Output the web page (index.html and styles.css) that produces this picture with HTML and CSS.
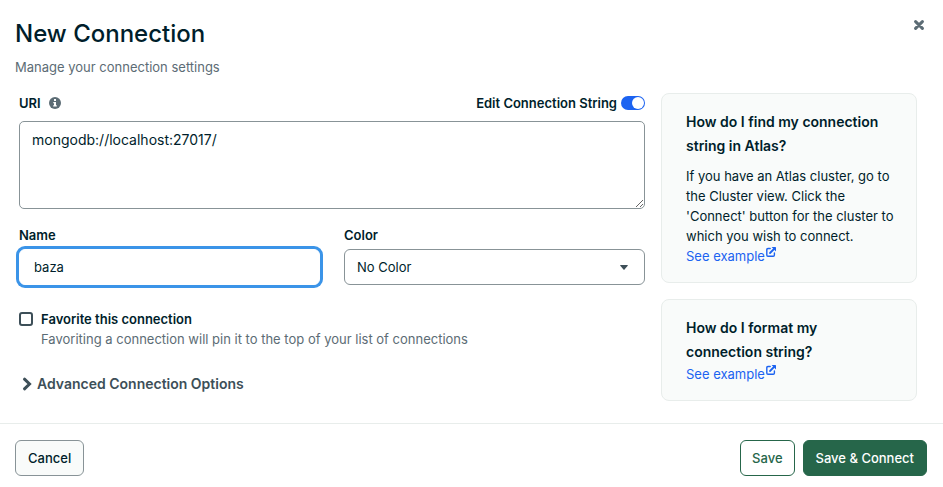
FILE: index.html
```html
<!DOCTYPE html>
<html lang="en">
<head>
<meta charset="utf-8">
<meta name="viewport" content="width=device-width, initial-scale=1">
<title>New Connection</title>
<link rel="stylesheet" href="styles.css">
</head>
<body>
<main class="dialog">
  <header class="header">
    <div>
      <h1 class="title">New Connection</h1>
      <p class="subtitle">Manage your connection settings</p>
    </div>
    <button class="close" type="button" aria-label="Close">
      <svg width="10" height="10" viewBox="0 0 10 10"><path d="M1.6 1.6 8.4 8.4M8.4 1.6 1.6 8.4" stroke="currentColor" stroke-width="3" stroke-linecap="round"/></svg>
    </button>
  </header>
  <div class="content">
    <form class="form" id="connection">
      <div class="uri-row">
        <label class="label" for="uri">URI</label>
        <svg class="info" width="12" height="12" viewBox="0 0 12 12" aria-hidden="true"><circle cx="6" cy="6" r="6" fill="#5c6c75"/><path d="M5 2h2v2H5zM4.3 5H7v3.2h.8v1.2H4.2V8.2H5v-2h-.7z" fill="#fff"/></svg>
        <label class="label toggle-label" for="edit">Edit Connection String</label>
        <input class="toggle" id="edit" type="checkbox" role="switch" checked>
      </div>
      <textarea class="field uri" id="uri" spellcheck="false">mongodb://localhost:27017/</textarea>
      <div class="columns">
        <div class="column">
          <label class="label" for="name">Name</label>
          <input class="field name" id="name" type="text" value="baza">
        </div>
        <div class="column">
          <label class="label" for="color">Color</label>
          <div class="select-wrap">
            <select class="field select" id="color"><option>No Color</option></select>
            <svg class="caret" width="8" height="5" viewBox="0 0 8 5" aria-hidden="true"><path d="M.7 0h6.6q.8 0 .4.7L4.5 4.6q-.5.6-1 0L.3.7Q-.1 0 .7 0z" fill="#3d4f58"/></svg>
          </div>
        </div>
      </div>
      <div class="favorite">
        <input class="checkbox" id="favorite" type="checkbox" aria-describedby="favorite-help">
        <div>
          <label class="label favorite-label" for="favorite">Favorite this connection</label>
          <p class="help" id="favorite-help">Favoriting a connection will pin it to the top of your list of connections</p>
        </div>
      </div>
      <button class="advanced" type="button" aria-expanded="false">
        <svg width="10" height="14" viewBox="0 0 10 14" aria-hidden="true"><path d="M2.5 2.2 7.5 7 2.5 11.8" fill="none" stroke="currentColor" stroke-width="3" stroke-linecap="round" stroke-linejoin="miter"/></svg>
        Advanced Connection Options
      </button>
    </form>
    <aside class="cards">
      <section class="card">
        <h2 class="card-title">How do I find my connection string in Atlas?</h2>
        <p class="card-text">If you have an Atlas cluster, go to the Cluster view. Click the 'Connect' button for the cluster to which you wish to connect.</p>
        <a class="link" href="#atlas">See example<svg class="external" width="10" height="10" viewBox="0 0 10 10" aria-hidden="true"><path d="M4.2 1.5H2Q.8 1.5.8 2.7V8Q.8 9.2 2 9.2h5.2Q8.4 9.2 8.4 8V6" fill="none" stroke="currentColor" stroke-width="1.4" stroke-linecap="round"/><path d="M4 6 8 2" stroke="currentColor" stroke-width="1.8" stroke-linecap="round"/><path d="M5.6 0H9.4Q10 0 10 .6V4.4z" fill="currentColor"/></svg></a>
      </section>
      <section class="card">
        <h2 class="card-title tight">How do I format my connection string?</h2>
        <a class="link" href="#format">See example<svg class="external" width="10" height="10" viewBox="0 0 10 10" aria-hidden="true"><path d="M4.2 1.5H2Q.8 1.5.8 2.7V8Q.8 9.2 2 9.2h5.2Q8.4 9.2 8.4 8V6" fill="none" stroke="currentColor" stroke-width="1.4" stroke-linecap="round"/><path d="M4 6 8 2" stroke="currentColor" stroke-width="1.8" stroke-linecap="round"/><path d="M5.6 0H9.4Q10 0 10 .6V4.4z" fill="currentColor"/></svg></a>
      </section>
    </aside>
  </div>
  <footer class="footer">
    <button class="button cancel" type="button">Cancel</button>
    <button class="button save" type="button">Save</button>
    <button class="button connect" type="submit" form="connection">Save &amp; Connect</button>
  </footer>
</main>
</body>
</html>
```
FILE: styles.css
```css
* {
  box-sizing: border-box;
}

body {
  margin: 0;
  background: #fff;
  color: #001e2b;
  font: 13px/20px Inter, "Liberation Sans", sans-serif;
}

h1, h2, p {
  margin: 0;
}

button, input, select, textarea {
  margin: 0;
  color: inherit;
  font: inherit;
}

.header {
  display: flex;
  align-items: flex-start;
  justify-content: space-between;
  padding: 18px 16px 16px 15px;
}

.title {
  font-size: 24px;
  font-weight: 500;
  line-height: 32px;
}

.subtitle {
  margin-top: 7px;
  color: #5c6c75;
}

.close {
  display: flex;
  padding: 2px 3px;
  border: 0;
  background: none;
  color: #5c6c75;
}

.content {
  display: grid;
  grid-template-columns: 1fr 256px;
  gap: 16px;
  align-items: start;
  padding: 0 26px 22px 19px;
}

.label {
  font-weight: 600;
}

.uri-row {
  display: flex;
  align-items: center;
  margin-bottom: 8px;
}

.info {
  margin-left: 8px;
}

.toggle-label {
  margin-left: auto;
}

.toggle {
  display: flex;
  justify-content: flex-end;
  width: 24px;
  height: 14px;
  margin-left: 4px;
  padding: 1px;
  appearance: none;
  border-radius: 7px;
  background: #1c63f1;
}

.toggle::before {
  content: "";
  width: 12px;
  height: 12px;
  border-radius: 50%;
  background: #fff;
}

.field {
  display: block;
  width: 100%;
  height: 36px;
  border: 1px solid #889397;
  border-radius: 6px;
  background: #fff;
}

.uri {
  height: 88px;
  padding: 8px 12px;
  border-radius: 5px;
  font-size: 14px;
  resize: vertical;
}

.columns {
  display: grid;
  grid-template-columns: 1fr 1fr;
  gap: 24px;
  margin-top: 16px;
}

.column {
  display: grid;
  gap: 4px;
}

.name {
  padding: 0 14px;
  border-color: #fff;
  box-shadow: 0 0 0 3px #3b94e8;
  outline: none;
}

.select-wrap {
  display: grid;
  align-items: center;
}

.select, .caret {
  grid-area: 1 / 1;
}

.select {
  padding: 0 12px;
  appearance: none;
}

.caret {
  justify-self: end;
  margin-right: 17px;
  pointer-events: none;
}

.favorite {
  display: flex;
  gap: 8px;
  margin-top: 24px;
}

.checkbox {
  flex: none;
  width: 14px;
  height: 14px;
  margin-top: 3px;
  appearance: none;
  border: 2px solid #3d4f58;
  border-radius: 3px;
}

.favorite-label {
  display: block;
}

.help {
  color: #5c6c75;
}

.advanced {
  display: flex;
  align-items: center;
  gap: 5px;
  margin-top: 25px;
  padding: 0 3px;
  border: 0;
  background: none;
  color: #3d4f58;
  font-size: 14px;
  font-weight: 600;
}

.cards {
  display: grid;
  gap: 16px;
}

.card {
  padding: 16px 20px 16px 24px;
  border: 1px solid #e8edeb;
  border-radius: 8px;
  background: #f9fbfa;
}

.card-title {
  margin-bottom: 8px;
  padding-right: 12px;
  font-size: 14px;
  font-weight: 600;
  line-height: 24px;
}

.tight {
  margin-bottom: 0;
}

.link {
  display: flex;
  align-items: flex-start;
  gap: 1px;
  color: #1c63f1;
  text-decoration: none;
}

.external {
  margin-top: 1px;
}

.footer {
  display: flex;
  gap: 8px;
  padding: 16px 16px 11px 15px;
  border-top: 1px solid #e8edeb;
}

.button {
  height: 36px;
  padding: 0 12px;
  border: 1px solid #889397;
  border-radius: 6px;
  background: #f9fbfa;
  font-weight: 500;
}

.cancel {
  margin-right: auto;
}

.save {
  padding: 0 11px;
  border-color: #26664a;
  background: #fff;
  color: #26664a;
}

.connect {
  border-color: #26664a;
  background: #26664a;
  color: #fff;
}
```
